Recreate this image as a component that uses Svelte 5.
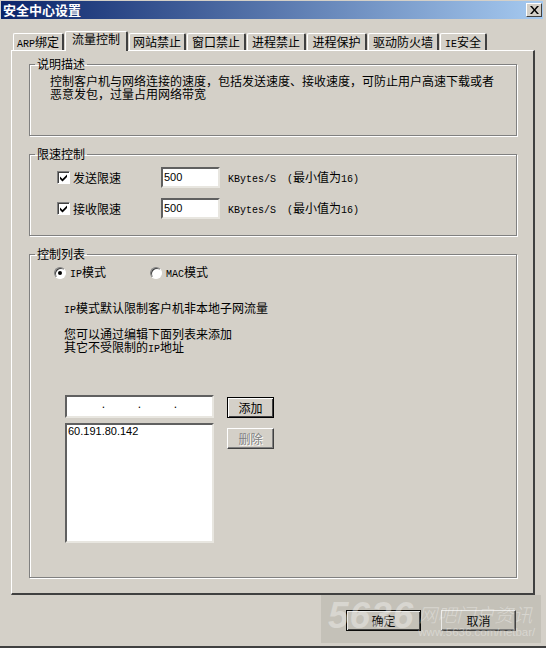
<script>
  const tabs = [
    { lat: 'ARP', text: '绑定', width: 51 },
    { lat: '', text: '流量控制', width: 63 },
    { lat: '', text: '网站禁止', width: 57 },
    { lat: '', text: '窗口禁止', width: 59 },
    { lat: '', text: '进程禁止', width: 59 },
    { lat: '', text: '进程保护', width: 60 },
    { lat: '', text: '驱动防火墙', width: 71 },
    { lat: 'IE', text: '安全', width: 47 }
  ];
  const limits = [
    { label: '发送限速', value: '500' },
    { label: '接收限速', value: '500' }
  ];
</script>

<div class="window">
  <div class="titlebar">
    <span class="title">安全中心设置</span>
    <button class="close" aria-label="关闭">
      <svg width="9" height="8" viewBox="0 0 9 8"><path d="M0 0h2l2.500 3 2.500-3h2L5.500 4 9 8H7L4.500 5 2 8H0l3.500-4z" fill="#000"/></svg>
    </button>
  </div>

  <div class="tabs">
    {#each tabs as tab, i}
      <div class="tab" class:active={i === 1} style="width: {tab.width}px"><span class="lat">{tab.lat}</span>{tab.text}</div>
    {/each}
  </div>

  <div class="panel">
    <fieldset class="desc">
      <legend>说明描述</legend>
      <p>控制客户机与网络连接的速度，包括发送速度、接收速度，可防止用户高速下载或者<br />恶意发包，过量占用网络带宽</p>
    </fieldset>

    <fieldset class="limit">
      <legend>限速控制</legend>
      <div class="limit-body">
        {#each limits as row}
          <div class="limit-row">
            <span class="check">
              <svg width="9" height="9" viewBox="0 0 9 9"><path d="M1 3.500 3.500 6 8 1.500V4L3.500 8.500 1 6z" fill="#000"/></svg>
            </span>
            <span class="check-label">{row.label}</span>
            <input class="field" value={row.value} />
            <span class="unit"><span class="lat">KBytes/S</span><span class="lat paren">(</span>最小值为<span class="lat">16)</span></span>
          </div>
        {/each}
      </div>
    </fieldset>

    <fieldset class="list">
      <legend>控制列表</legend>
      <div class="list-body">
        <div class="modes">
          <span class="radio on"></span><span class="mode-label"><span class="lat">IP</span>模式</span>
          <span class="radio"></span><span class="mode-label"><span class="lat">MAC</span>模式</span>
        </div>
        <p class="note"><span class="lat">IP</span>模式默认限制客户机非本地子网流量</p>
        <p class="note gap">您可以通过编辑下面列表来添加<br />其它不受限制的<span class="lat">IP</span>地址</p>

        <div class="editor">
          <div class="editor-left">
            <div class="ip-box"><span>.</span><span>.</span><span>.</span></div>
            <div class="list-box">60.191.80.142</div>
          </div>
          <div class="editor-right">
            <button class="btn default small">添加</button>
            <button class="btn small disabled">删除</button>
          </div>
        </div>
      </div>
    </fieldset>
  </div>

  <div class="footer">
    <button class="btn default wide">确定</button>
    <button class="btn wide">取消</button>
  </div>

  <div class="watermark">
    <span class="wm-num">5636</span>
    <div class="wm-side">
      <span class="wm-cn">网吧门户资讯</span>
      <span class="wm-url">www.5636.com/netbar/</span>
    </div>
  </div>
</div>

<style>
:global(body) {
  margin: 0;
  background: #d4d0c8;
  overflow: hidden;
}

.window {
  position: relative;
  box-sizing: border-box;
  width: 546px;
  height: 648px;
  padding: 1px 3px 0 1px;
  background: #d4d0c8;
  border-bottom: 2px solid #404040;
  font: 12px/13px "Noto Sans CJK SC", "Liberation Sans", sans-serif;
  color: #000;
}

.lat {
  font-family: "Liberation Mono", monospace;
  font-size: 10px;
}

.titlebar {
  height: 18px;
  display: flex;
  align-items: center;
  justify-content: space-between;
  background: linear-gradient(to right, #0a246a, #a6caf0);
}

.title {
  padding-left: 2px;
  font-size: 13px;
  line-height: 16px;
  font-weight: 700;
  color: #fff;
}

.close {
  box-sizing: border-box;
  width: 16px;
  height: 14px;
  margin-right: 1px;
  padding: 0;
  display: flex;
  align-items: center;
  justify-content: center;
  background: #d4d0c8;
  border: 1px solid;
  border-color: #fff #404040 #404040 #fff;
}

.tabs {
  display: flex;
  align-items: flex-end;
  height: 31px;
  padding-left: 12px;
}

.tab {
  box-sizing: border-box;
  height: 17px;
  margin-right: 1px;
  text-align: center;
  line-height: 15px;
  background: #d4d0c8;
  border-top: 1px solid #fff;
  border-left: 1px solid #fff;
  border-right: 2px solid #404040;
  border-radius: 2px 2px 0 0;
}

.tab.active {
  position: relative;
  z-index: 1;
  height: 20px;
  margin-bottom: -1px;
  line-height: 13px;
}

.panel {
  box-sizing: border-box;
  width: 524px;
  height: 545px;
  margin-left: 10px;
  padding: 6px 16px 0 17px;
  border-top: 1px solid #fff;
  border-left: 1px solid #fff;
  border-right: 2px solid #404040;
  border-bottom: 2px solid #404040;
}

fieldset {
  box-sizing: border-box;
  margin: 0;
  padding: 0;
  border: 1px solid #808080;
  box-shadow: 1px 1px 0 #fff, inset 1px 1px 0 #fff;
}

legend {
  margin-left: 5px;
  padding: 0 2px;
  font-size: 12px;
  line-height: 14px;
}

.desc {
  height: 79px;
}

.desc p {
  margin: 3px 0 0 20px;
}

.limit {
  height: 89px;
  margin-top: 11px;
}

.limit-body {
  padding: 6px 0 0 27px;
}

.limit-row {
  display: flex;
  align-items: center;
  height: 21px;
  margin-bottom: 10px;
}

.check {
  box-sizing: border-box;
  width: 13px;
  height: 13px;
  display: flex;
  align-items: center;
  justify-content: center;
  background: #fff;
  border: 1px solid;
  border-color: #808080 #fff #fff #808080;
  box-shadow: inset 1px 1px 0 #404040;
}

.check-label {
  width: 88px;
  margin-left: 3px;
}

.field {
  box-sizing: border-box;
  width: 59px;
  height: 21px;
  padding: 0 0 2px 1px;
  background: #fff;
  border: 2px solid;
  border-color: #606060 #e8e6e0 #e8e6e0 #606060;
  border-radius: 0;
  outline: none;
  font: 11px "Liberation Sans", sans-serif;
  color: #000;
}

.unit {
  margin-left: 8px;
}

.paren {
  margin-left: 11px;
}

.list {
  height: 331px;
  margin-top: 11px;
}

.list-body {
  padding-left: 24px;
}

.modes {
  display: flex;
  align-items: center;
  height: 13px;
  margin-top: 5px;
}

.radio {
  box-sizing: border-box;
  position: relative;
  width: 12px;
  height: 12px;
  background: #fff;
  border: 1px solid;
  border-color: #808080 #fff #fff #808080;
  border-radius: 50%;
  box-shadow: inset 1px 1px 0 #404040;
}

.radio.on::after {
  content: "";
  position: absolute;
  left: 3px;
  top: 3px;
  width: 4px;
  height: 4px;
  border-radius: 50%;
  background: #000;
}

.mode-label {
  width: 80px;
  margin-left: 4px;
}

.note {
  margin: 22px 0 0 10px;
}

.note.gap {
  margin-top: 10px;
}

.editor {
  display: flex;
  margin: 39px 0 0 11px;
}

.editor-left {
  display: flex;
  flex-direction: column;
  gap: 5px;
  width: 149px;
}

.ip-box,
.list-box {
  box-sizing: border-box;
  background: #fff;
  border: 2px solid;
  border-color: #606060 #e8e6e0 #e8e6e0 #606060;
}

.ip-box {
  height: 23px;
  display: grid;
  grid-template-columns: 36px 36px 36px;
  justify-content: center;
  font: 12px/15px "Liberation Sans", sans-serif;
  text-align: center;
}

.list-box {
  height: 120px;
  padding-left: 1px;
  font: 11px/13px "Liberation Sans", sans-serif;
}

.editor-right {
  display: flex;
  flex-direction: column;
  gap: 10px;
  margin: 2px 0 0 13px;
}

.btn {
  box-sizing: border-box;
  height: 21px;
  padding: 0;
  background: #d4d0c8;
  border: 1px solid;
  border-color: #fff #404040 #404040 #fff;
  box-shadow: inset -1px -1px 0 #808080;
  font: 12px/13px "Noto Sans CJK SC", sans-serif;
  color: #000;
}

.btn.default {
  border: 1px solid #000;
  box-shadow: inset 1px 1px 0 #fff, inset -1px -1px 0 #404040;
}

.btn.small {
  width: 47px;
}

.btn.wide {
  width: 75px;
}

.btn.disabled {
  color: #808080;
  text-shadow: 1px 1px 0 #fff;
}

.footer {
  display: flex;
  justify-content: flex-end;
  gap: 20px;
  padding: 15px 27px 0 0;
}

.watermark {
  position: absolute;
  left: 321px;
  top: 595px;
  box-sizing: border-box;
  width: 220px;
  height: 48px;
  display: flex;
  gap: 4px;
  padding-left: 7px;
  background: rgba(90, 90, 80, 0.13);
  color: rgba(255, 255, 255, 0.35);
  pointer-events: none;
  overflow: hidden;
}

.wm-num {
  font: italic 700 37px/41px "Liberation Sans", sans-serif;
  letter-spacing: 1px;
}

.wm-side {
  display: flex;
  flex-direction: column;
  padding-top: 7px;
}

.wm-cn {
  font: italic 300 19px/24px "Noto Sans CJK SC", sans-serif;
}

.wm-url {
  font: 11.500px/13px "Liberation Sans", sans-serif;
}
</style>
